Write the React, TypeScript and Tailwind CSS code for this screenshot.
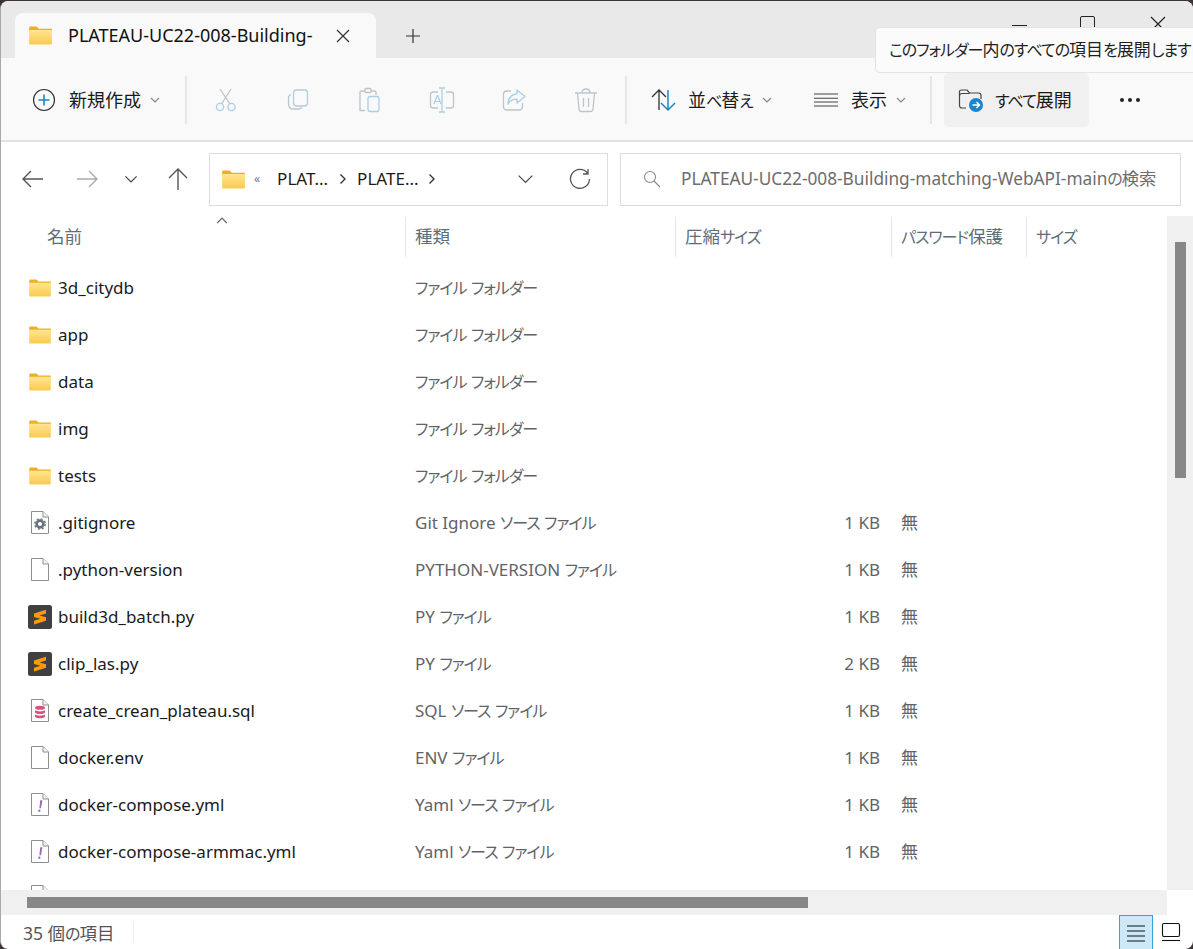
import React from "react";

const Jp = ({ t }: { t: string }) => (
  <>
    {t.split(/([\u3040-\u30ff]+)/).map((p, i) =>
      i % 2 === 1 ? (
        <span key={i} className="text-[16px] tracking-[-1px]">{p}</span>
      ) : (
        <React.Fragment key={i}>{p}</React.Fragment>
      ),
    )}
  </>
);

const Folder = ({ s = 22 }: { s?: number }) => (
  <svg width={s} height={Math.round((s * 20) / 24)} viewBox="0 0 24 20" className="shrink-0">
    <defs>
      <linearGradient id="fg" x1="0" y1="0" x2="0" y2="1">
        <stop offset="0" stopColor="#ffe68f" />
        <stop offset="1" stopColor="#fbc94f" />
      </linearGradient>
    </defs>
    <path d="M0 2.2C0 1 .8.5 1.6.5h5.6c.9 0 1.2.4 1.8 1l1.2 1.3H24v3H0z" fill="#eeb023" />
    <path d="M0 4.2h24v14.2c0 .7-.5 1.1-1.1 1.1H1.1C.5 19.5 0 19.1 0 18.4z" fill="url(#fg)" />
  </svg>
);

const FileBase = ({ children }: { children?: React.ReactNode }) => (
  <svg width="18" height="23" viewBox="0 0 18 23" className="shrink-0">
    <path d="M.5.5h11.5l5.500 5.500v16.500H.5z" fill="#fff" stroke="#8f8f8f" />
    <path d="M12 .5v5.500h5.500" fill="#f3f3f3" stroke="#8f8f8f" />
    {children}
  </svg>
);

const GearFile = () => (
  <FileBase>
    <circle cx="9" cy="13" r="3.4" fill="none" stroke="#66737d" strokeWidth="2.6" />
    <circle cx="9" cy="13" r="5.2" fill="none" stroke="#66737d" strokeWidth="1.4" strokeDasharray="2 2.1" />
  </FileBase>
);

const SqlFile = () => (
  <FileBase>
    <ellipse cx="9" cy="8.8" rx="5" ry="2" fill="#de4f7d" />
    <path d="M4 11v2.2c0 1 2.2 1.8 5 1.8s5-.8 5-1.8V11c-1 1-3 1.4-5 1.4S5 12 4 11z" fill="#de4f7d" />
    <path d="M4 15.2v2.2c0 1 2.2 1.8 5 1.8s5-.8 5-1.8v-2.2c-1 1-3 1.4-5 1.4s-4-.4-5-1.4z" fill="#de4f7d" />
  </FileBase>
);

const YamlFile = () => (
  <FileBase>
    <path d="M9.2 7.2h2.2l-1.4 8h-1.6z" fill="#9b6bb3" />
    <rect x="7.3" y="16.6" width="2" height="2.2" fill="#9b6bb3" />
  </FileBase>
);

const Sublime = () => (
  <svg width="24" height="24" viewBox="0 0 24 24" className="shrink-0">
    <rect width="24" height="24" rx="2.5" fill="#404040" />
    <path d="M6 8.500 18 4.800v3.700L11.500 10.500 18 12.300v3.400L6 19.400v-3.700l6.500-2L6 11.900z" fill="#ff9a0d" />
  </svg>
);

const rows: [React.ReactNode, string, string, string, string][] = [
  [<Folder />, "3d_citydb", "ファイル フォルダー", "", ""],
  [<Folder />, "app", "ファイル フォルダー", "", ""],
  [<Folder />, "data", "ファイル フォルダー", "", ""],
  [<Folder />, "img", "ファイル フォルダー", "", ""],
  [<Folder />, "tests", "ファイル フォルダー", "", ""],
  [<GearFile />, ".gitignore", "Git Ignore ソース ファイル", "1 KB", "無"],
  [<FileBase />, ".python-version", "PYTHON-VERSION ファイル", "1 KB", "無"],
  [<Sublime />, "build3d_batch.py", "PY ファイル", "1 KB", "無"],
  [<Sublime />, "clip_las.py", "PY ファイル", "2 KB", "無"],
  [<SqlFile />, "create_crean_plateau.sql", "SQL ソース ファイル", "1 KB", "無"],
  [<FileBase />, "docker.env", "ENV ファイル", "1 KB", "無"],
  [<YamlFile />, "docker-compose.yml", "Yaml ソース ファイル", "1 KB", "無"],
  [<YamlFile />, "docker-compose-armmac.yml", "Yaml ソース ファイル", "1 KB", "無"],
];

const Chev = ({ c = "#8a8a8a", w = 10, up = false }: { c?: string; w?: number; up?: boolean }) => (
  <svg width={w} height={w * 0.6} viewBox="0 0 10 6" className="shrink-0">
    <path d={up ? "M1 5l4-4 4 4" : "M1 1l4 4 4-4"} fill="none" stroke={c} strokeWidth={12 / w} />
  </svg>
);

const Crumb = () => (
  <svg width="8" height="12" viewBox="0 0 8 12" className="shrink-0">
    <path d="M1.500 1.500 6 6l-4.500 4.500" fill="none" stroke="#333" strokeWidth="1.400" />
  </svg>
);

const Ico = ({ w = 26, h = 26, children }: { w?: number; h?: number; children: React.ReactNode }) => (
  <svg width={w} height={h} viewBox={`0 0 ${w} ${h}`} fill="none" className="shrink-0">
    {children}
  </svg>
);

const G = "#bcc4c9";
const B = "#a9cfe6";

const Sep = () => <div className="h-[48px] w-[2px] shrink-0 bg-[#e6e6e6]" />;

const Cell = ({ children }: { children: React.ReactNode }) => (
  <div className="flex w-[72px] shrink-0 items-center justify-center">{children}</div>
);

const HeaderCol = ({ w, text }: { w: string; text: string }) => (
  <div className={`${w} flex h-[40px] shrink-0 items-center`}>
    <div className="mr-[9px] h-[40px] w-px bg-[#e3e5e7]" />
    <span className="whitespace-nowrap pb-[2px] text-[17.5px] text-[#5f6d7a]"><Jp t={text} /></span>
  </div>
);

export default function App() {
  return (
    <div className="relative h-[949px] w-[1193px] overflow-hidden bg-[#3b3338] font-['Noto_Sans','Noto_Sans_CJK_JP',sans-serif] text-[17px] text-[#1a1a1a] [font-feature-settings:'palt']">
      <div className="mt-px flex h-[948px] flex-col rounded-[8px] border-l border-[#a9a9a9] bg-white">
        {/* Tab bar */}
        <div className="flex h-[57px] shrink-0 items-end rounded-t-[8px] bg-[#e9e9e9] pl-[14px]">
          <div className="flex h-[45px] w-[361px] shrink-0 items-center rounded-t-[8px] bg-[#f9f9f9] pl-[14px]">
            <Folder s={23} />
            <span className="ml-[16px] w-[267px] whitespace-nowrap text-[18px] text-[#111]">PLATEAU-UC22-008-Building-</span>
            <Ico w={16} h={16}>
              <path d="M2 2l12 12M14 2L2 14" stroke="#333" strokeWidth="1.2" />
            </Ico>
          </div>
          <div className="ml-[29px] flex h-[45px] items-center">
            <Ico w={16} h={16}>
              <path d="M8 1v14M1 8h14" stroke="#333" strokeWidth="1.2" />
            </Ico>
          </div>
          <div className="ml-auto flex h-[57px] items-start pt-[15px]">
            <div className="flex w-[40px] justify-center pt-[9px]">
              <div className="h-px w-[15px] bg-[#222]" />
            </div>
            <div className="flex w-[96px] justify-center">
              <div className="h-[20px] w-[15px] rounded-[2px] border border-[#222]" />
            </div>
            <div className="mr-[12px] flex w-[46px] justify-center">
              <Ico w={16} h={16}>
                <path d="M1 1l14 14M15 1L1 15" stroke="#222" strokeWidth="1.2" />
              </Ico>
            </div>
          </div>
        </div>

        {/* Command bar */}
        <div className="flex h-[84px] shrink-0 items-center border-b-2 border-[#e2e2e2] bg-[#f9f9f9] pt-[1px] text-[18px]">
          <div className="ml-[31px] flex w-[153px] shrink-0 items-center">
            <Ico w={24} h={24}>
              <circle cx="12" cy="12" r="10.5" stroke="#333" strokeWidth="1.2" />
              <path d="M12 6.5v11M6.5 12h11" stroke="#1a86c8" strokeWidth="1.6" />
            </Ico>
            <span className="ml-[13px] mt-[2px]">新規作成</span>
            <span className="ml-[9px]"><Chev /></span>
          </div>
          <Sep />
          <div className="ml-[3px] flex w-[435px] shrink-0">
            <Cell>
              <Ico>
                <circle cx="7" cy="20" r="3.6" stroke={B} strokeWidth="1.3" />
                <circle cx="18.5" cy="20" r="3.6" stroke={B} strokeWidth="1.3" />
                <path d="M8.5 17 18 2M17 17 7 2" stroke={G} strokeWidth="1.3" />
              </Ico>
            </Cell>
            <Cell>
              <Ico>
                <rect x="8.5" y="3" width="14" height="16" rx="3" stroke={B} strokeWidth="1.3" />
                <path d="M6 7.5c-1.6.6-2.5 1.6-2.5 3.5v6c0 3 2 5 5 5h5c1.6 0 2.8-.7 3.4-1.8" stroke={G} strokeWidth="1.3" />
              </Ico>
            </Cell>
            <Cell>
              <Ico>
                <path d="M8 4H4.5C3.4 4 3 4.600 3 5.500v18h5M19 8V5.500C19 4.500 18.500 4 17.500 4H14" stroke={G} strokeWidth="1.3" />
                <rect x="8" y="1.500" width="6" height="4" rx="1" stroke={G} strokeWidth="1.300" />
                <rect x="11" y="9.500" width="11" height="15" rx="2" stroke={B} strokeWidth="1.300" />
              </Ico>
            </Cell>
            <Cell>
              <Ico>
                <path d="M9 5H4C2.500 5 1.500 6 1.500 7.500v11c0 1.500 1 2.500 2.500 2.500h5M17 5h5c1.500 0 2.500 1 2.500 2.500v11c0 1.500-1 2.500-2.500 2.500h-5" stroke={G} strokeWidth="1.300" />
                <path d="M13 1v24M10 1h6M10 25h6" stroke={B} strokeWidth="1.300" />
                <path d="M5 17l3.300-8.500h.4L12 17M6 14.500h5" stroke={B} strokeWidth="1.200" />
              </Ico>
            </Cell>
            <Cell>
              <Ico>
                <path d="M10 4H6C3.800 4 2.500 5.500 2.500 7.500v12C2.500 21.500 4 23 6 23h12c2 0 3.500-1.500 3.500-3.500V16" stroke={G} strokeWidth="1.300" />
                <path d="M16 3l8 6.500-8 6.500v-3.800c-4 0-7 1.300-9 5 0-5.500 3-9.500 9-10.500z" stroke={B} strokeWidth="1.300" strokeLinejoin="round" />
              </Ico>
            </Cell>
            <Cell>
              <Ico>
                <path d="M2 6h22M9 6c0-2.500 1.500-4 4-4s4 1.500 4 4" stroke={G} strokeWidth="1.300" />
                <path d="M4.500 6l1.500 16c.1 1.300 1 2.500 2.500 2.500h9c1.500 0 2.400-1.200 2.500-2.500l1.500-16M10.500 11v9M15.500 11v9" stroke={G} strokeWidth="1.300" />
              </Ico>
            </Cell>
          </div>
          <Sep />
          <div className="ml-[24px] flex w-[152px] shrink-0 items-center">
            <Ico w={26} h={24}>
              <path d="M8 22V2M1 9l7-7 7 7" stroke="#333" strokeWidth="1.300" />
              <path d="M17 2v20M10 15l7 7 7-7" stroke="#1a86c8" strokeWidth="1.500" />
            </Ico>
            <span className="ml-[11px] mt-[2px] whitespace-nowrap"><Jp t="並べ替え" /></span>
            <span className="ml-[9px]"><Chev /></span>
          </div>
          <div className="ml-[11px] flex w-[116px] shrink-0 items-center">
            <Ico w={24} h={16}>
              <path d="M0 2h24M0 6.300h24M0 10h24M0 14h24" stroke="#444" strokeWidth="1.100" />
            </Ico>
            <span className="ml-[13px] mt-[2px]">表示</span>
            <span className="ml-[9px]"><Chev /></span>
          </div>
          <Sep />
          <div className="ml-[12px] flex h-[54px] w-[145px] shrink-0 items-center rounded-[5px] bg-[#f0f0f0] pl-[14px]">
            <Ico w={26} h={24}>
              <path d="M8 20H4c-1.500 0-2.500-1-2.500-2.500v-14C1.500 2.500 2.300 2 3.500 2h5.500l2.500 3h9c1.300 0 2.500 1 2.500 2.500V11M1.500 8c0-1 1-2.500 2.500-2.500h7.500" stroke="#444" strokeWidth="1.200" />
              <circle cx="18" cy="17" r="7" fill="#1a86d0" />
              <path d="M14.500 17h6.500M18.500 14l3 3-3 3" stroke="#fff" strokeWidth="1.400" />
            </Ico>
            <span className="ml-[11px] mt-[2px] whitespace-nowrap"><Jp t="すべて展開" /></span>
          </div>
          <div className="ml-[31px] flex gap-[4px]">
            <div className="h-[4px] w-[4px] rounded-full bg-[#222]" />
            <div className="h-[4px] w-[4px] rounded-full bg-[#222]" />
            <div className="h-[4px] w-[4px] rounded-full bg-[#222]" />
          </div>
        </div>

        {/* Address row */}
        <div className="flex h-[74px] shrink-0 items-center bg-white">
          <div className="ml-[20px] flex w-[188px] shrink-0 items-center">
            <Ico w={24} h={20}>
              <path d="M22 10H2M10 2l-8 8 8 8" stroke="#555" strokeWidth="1.400" />
            </Ico>
            <span className="ml-[30px]">
              <Ico w={24} h={20}>
                <path d="M2 10h20M14 2l8 8-8 8" stroke="#aaa" strokeWidth="1.400" />
              </Ico>
            </span>
            <span className="ml-[25px]"><Chev c="#444" w={14} /></span>
            <span className="ml-[29px]">
              <Ico w={22} h={24}>
                <path d="M11 23V2M2 11l9-9 9 9" stroke="#555" strokeWidth="1.400" />
              </Ico>
            </span>
          </div>
          <div className="flex h-[53px] w-[399px] shrink-0 items-center border border-[#dcdcdc] pl-[12px]">
            <Folder s={23} />
            <span className="ml-[9px] text-[12px] text-[#777]">«</span>
            <span className="ml-[17px] w-[49px] whitespace-nowrap">PLAT...</span>
            <span className="ml-[13px]"><Crumb /></span>
            <span className="ml-[10px] w-[60px] whitespace-nowrap">PLATE...</span>
            <span className="ml-[11px]"><Crumb /></span>
            <span className="ml-[81px]"><Chev c="#444" w={17} /></span>
            <span className="ml-[35px]">
              <Ico w={22} h={22}>
                <path d="M18.500 5A9.500 9.500 0 1 0 20.500 11M19 1v5h-5" stroke="#555" strokeWidth="1.300" />
              </Ico>
            </span>
          </div>
          <div className="ml-[12px] flex h-[53px] w-[561px] shrink-0 items-center border border-[#dcdcdc] pl-[22px]">
            <Ico w={18} h={18}>
              <circle cx="7" cy="7" r="5.500" stroke="#888" strokeWidth="1.100" />
              <path d="M11 11l6 6" stroke="#888" strokeWidth="1.100" />
            </Ico>
            <span className="ml-[20px] whitespace-nowrap text-[17.25px] text-[#6d6d6d]"><Jp t="PLATEAU-UC22-008-Building-matching-WebAPI-mainの検索" /></span>
          </div>
        </div>

        {/* List + scrollbar */}
        <div className="flex min-h-0 flex-1">
          <div className="relative min-w-0 flex-1 overflow-hidden">
            <div className="absolute left-[215px] top-[1px]"><Chev c="#666" w={12} up /></div>
            <div className="flex items-center pt-[1px]">
              <div className="w-[404px] shrink-0 pb-[2px] pl-[46px]">
                <span className="text-[17.5px] text-[#5f6d7a]">名前</span>
              </div>
              <HeaderCol w="w-[270px]" text="種類" />
              <HeaderCol w="w-[216px]" text="圧縮サイズ" />
              <HeaderCol w="w-[135px]" text="パスワード保護" />
              <HeaderCol w="w-[141px]" text="サイズ" />
            </div>
            <div className="pt-[7px]">
              {rows.map(([icon, name, type, size, pw]) => (
                <div key={name} className="flex h-[47px] items-center">
                  <div className="ml-[27px] flex w-[24px] shrink-0 justify-center">{icon}</div>
                  <div className="ml-[6px] w-[357px] shrink-0 whitespace-nowrap">{name}</div>
                  <div className="w-[360px] shrink-0 whitespace-nowrap text-[#5f6468]"><Jp t={type} /></div>
                  <div className="w-[105px] shrink-0 whitespace-nowrap text-right text-[#5f6468]">{size}</div>
                  <div className="ml-[21px] text-[#5f6468]">{pw}</div>
                </div>
              ))}
              <div className="flex h-[47px] pt-[10px]">
                <div className="ml-[27px] flex w-[24px] shrink-0 justify-center"><FileBase /></div>
              </div>
            </div>
          </div>
          <div className="w-[26px] shrink-0 bg-[#f0f0f0] pl-[8px] pt-[26px]">
            <div className="h-[236px] w-[11px] bg-[#878787]" />
          </div>
        </div>

        <div className="flex h-[25px] shrink-0 items-center">
          <div className="h-full w-[1166px] bg-[#f0f0f0] pl-[26px] pt-[7px]">
            <div className="h-[11px] w-[781px] bg-[#878787]" />
          </div>
        </div>

        {/* Status */}
        <div className="flex h-[34px] shrink-0 items-center">
          <span className="ml-[22px] mt-[2px] w-[110px] whitespace-nowrap text-[17.5px] text-[#555]"><Jp t="35 個の項目" /></span>
          <div className="h-[20px] w-px bg-[#eeeeee]" />
          <div className="ml-[985px] flex h-[34px] w-[34px] items-center justify-center border border-b-0 border-[#35a3d6] bg-[#cde8f6]">
            <Ico w={20} h={20}>
              <path d="M1 3h18M1 8h18M1 13h18M1 18h18" stroke="#111" strokeWidth="1.100" />
            </Ico>
          </div>
          <div className="ml-[6px] flex h-[34px] w-[24px] items-center justify-center">
            <Ico w={20} h={20}>
              <rect x="1.500" y="1.500" width="17" height="13" rx="1.500" stroke="#111" strokeWidth="1.100" />
              <path d="M1 18.500h18" stroke="#111" strokeWidth="1.100" />
            </Ico>
          </div>
        </div>
      </div>

      {/* Tooltip */}
      <div className="absolute left-[875px] top-[27px] flex h-[46px] w-[340px] items-center rounded-[5px] border border-[#e3e3e3] bg-[#fbfbfb] pl-[13px]">
        <span className="whitespace-nowrap text-[#1f1f1f]"><Jp t="このフォルダー内のすべての項目を展開します" /></span>
      </div>
    </div>
  );
}
